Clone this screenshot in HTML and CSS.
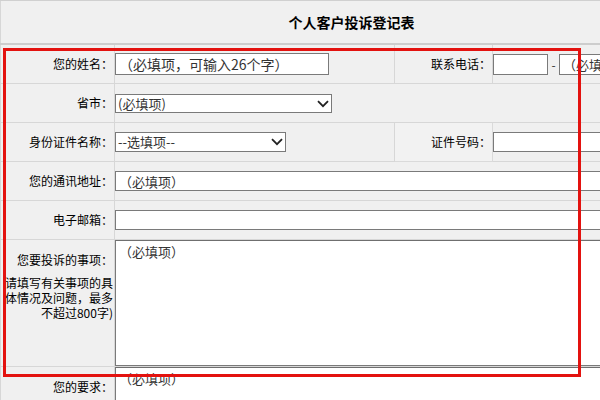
FILE: index.html
```html
<!DOCTYPE html>
<html lang="zh-CN">
<head>
<meta charset="utf-8">
<title>个人客户投诉登记表</title>
<link rel="stylesheet" href="styles.css">
</head>
<body>
<div class="page">
<table class="form">
  <colgroup>
    <col class="c1"><col class="c2"><col class="c3"><col class="c4">
  </colgroup>
  <tr class="title-row">
    <td colspan="4" class="title">个人客户投诉登记表</td>
  </tr>
  <tr class="row">
    <td class="label">您的姓名：</td>
    <td class="field"><input class="in in-name" type="text" value="（必填项，可输入26个字）"></td>
    <td class="label">联系电话：</td>
    <td class="field"><input class="in in-area" type="text" value=""><span class="dash">-</span><input class="in in-phone" type="text" value="（必填项）"></td>
  </tr>
  <tr class="row">
    <td class="label">省市：</td>
    <td class="field" colspan="3">
      <span class="sel sel-city">
        <select class="select"><option>(必填项)</option></select>
        <svg class="chev" width="12" height="8" viewBox="0 0 12 8"><path d="M1 1.2 L6 6.2 L11 1.2" fill="none" stroke="#222" stroke-width="1.8"/></svg>
      </span>
    </td>
  </tr>
  <tr class="row">
    <td class="label">身份证件名称：</td>
    <td class="field">
      <span class="sel sel-id">
        <select class="select"><option>--选填项--</option></select>
        <svg class="chev" width="12" height="8" viewBox="0 0 12 8"><path d="M1 1.2 L6 6.2 L11 1.2" fill="none" stroke="#222" stroke-width="1.8"/></svg>
      </span>
    </td>
    <td class="label label-box">证件号码：</td>
    <td class="field"><input class="in in-wide" type="text" value=""></td>
  </tr>
  <tr class="row">
    <td class="label">您的通讯地址：</td>
    <td class="field" colspan="3"><input class="in in-full" type="text" value="（必填项）"></td>
  </tr>
  <tr class="row">
    <td class="label">电子邮箱：</td>
    <td class="field" colspan="3"><input class="in in-full" type="text" value=""></td>
  </tr>
  <tr>
    <td class="label label-top">
      <div class="label-line">您要投诉的事项：</div>
      <div class="hint">请填写有关事项的具体情况及问题，最多不超过800字)</div>
    </td>
    <td class="field field-area" colspan="3"><textarea class="area area-big">（必填项）</textarea></td>
  </tr>
  <tr>
    <td class="label label-top"><div class="label-line">您的要求：</div></td>
    <td class="field field-area" colspan="3"><textarea class="area area-small">（必填项）</textarea></td>
  </tr>
</table>
<div class="highlight"></div>
</div>
</body>
</html>
```
FILE: styles.css
```css
html, body {
  margin: 0;
  padding: 0;
  background: #f0f0f0;
  overflow: hidden;
}
body {
  font-family: "Noto Sans CJK SC", "Microsoft YaHei", sans-serif;
  color: #000;
}
.page {
  position: relative;
  width: 600px;
  height: 400px;
  overflow: hidden;
}
.form {
  border-collapse: collapse;
  table-layout: fixed;
  width: 702px;
  font-size: 12px;
  background: #f0f0f0;
}
.c1 { width: 114px; }
.c2 { width: 280px; }
.c3 { width: 98px; }
.c4 { width: 210px; }
td {
  border: 1px solid #d7d7d7;
  padding: 0;
}
.title-row td {
  border-top: 1px solid #d0d0d0;
  border-bottom: 2px solid #cdcdcd;
}
.title {
  height: 42px;
  text-align: center;
  font-weight: bold;
  font-size: 14px;
  vertical-align: middle;
}
.row td {
  height: 38px;
  vertical-align: middle;
}
.label {
  text-align: right;
  padding-right: 1px;
  white-space: nowrap;
  line-height: 16px;
}
.label-box {
  border-color: #dadada;
  background: #f2f2f2;
}
.label-top {
  vertical-align: top;
  white-space: normal;
}
.label-line {
  padding-top: 12px;
  white-space: nowrap;
}
.hint {
  margin-top: 7px;
  line-height: 15px;
  text-align: right;
  margin-left: 2px;
}
.field {
  text-align: left;
  white-space: nowrap;
}
.in {
  box-sizing: border-box;
  height: 20px;
  border: 1px solid #7a7a7a;
  background: #fff;
  font-family: "Noto Sans CJK SC", "Microsoft YaHei", sans-serif;
  font-size: 13px;
  color: #333;
  padding: 0 3px;
  margin: 0;
  vertical-align: middle;
  outline: none;
}
.in-name {
  width: 214px;
  height: 22px;
  font-size: 14px;
}
.in-area {
  width: 55px;
  height: 21px;
}
.dash {
  display: inline-block;
  width: 11px;
  text-align: center;
  vertical-align: middle;
  font-size: 12px;
  color: #333;
}
.in-phone {
  width: 110px;
  height: 21px;
}
.in-wide {
  width: 205px;
}
.in-full {
  width: 587px;
}
.sel {
  position: relative;
  display: inline-block;
  vertical-align: middle;
}
.select {
  -webkit-appearance: none;
  appearance: none;
  box-sizing: border-box;
  display: block;
  border: 1px solid #7a7a7a;
  border-radius: 0;
  background: #fff;
  font-family: "Noto Sans CJK SC", "Microsoft YaHei", sans-serif;
  font-size: 13px;
  color: #333;
  padding: 0 2px;
  margin: 0;
  outline: none;
}
.sel-city .select {
  width: 217px;
  height: 19px;
  line-height: 17px;
}
.sel-id .select {
  width: 171px;
  height: 20px;
  line-height: 18px;
}
.chev {
  position: absolute;
  right: 3px;
  top: 50%;
  margin-top: -4px;
  pointer-events: none;
}
.field-area {
  vertical-align: top;
}
.area {
  display: block;
  box-sizing: border-box;
  width: 587px;
  border: 1px solid #7a7a7a;
  border-top-color: #6f6f6f;
  background: #fff;
  font-family: "Noto Sans CJK SC", "Microsoft YaHei", sans-serif;
  font-size: 13px;
  color: #333;
  padding: 2px 3px;
  margin: 0;
  resize: none;
  outline: none;
  line-height: 18px;
}
.area-big {
  height: 126px;
}
.area-small {
  height: 60px;
}
.highlight {
  position: absolute;
  left: 3px;
  top: 48px;
  width: 578px;
  height: 329px;
  box-sizing: border-box;
  border: 3px solid #e3120f;
  pointer-events: none;
}
```
